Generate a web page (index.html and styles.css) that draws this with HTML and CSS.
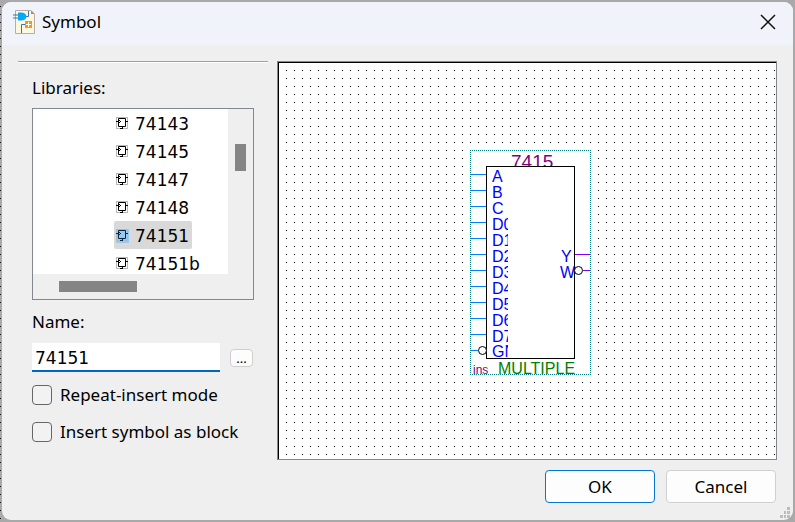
FILE: index.html
```html
<!DOCTYPE html>
<html lang="en">
<head>
<meta charset="utf-8">
<title>Symbol</title>
<link rel="stylesheet" href="styles.css">
</head>
<body>
<svg class="defs" aria-hidden="true">
  <symbol id="part" viewBox="0 0 13 14">
    <rect x=".5" y=".5" width="11" height="11" fill="none" stroke="#b8b8b8"/>
    <path d="M2.5 1.5H9.5V9.5H2.5ZM0 4.500H2M10 4.500H12M6.500 10V12M4 11.500H7" fill="none" stroke="currentColor"/>
    <path d="M3 3h1v1h-1zM4 4h1v1h-1zM3 5h1v1h-1z" fill="currentColor"/>
  </symbol>
</svg>
<main class="dialog">
  <header class="titlebar">
    <svg class="app-icon" width="22" height="24" viewBox="0 0 22 24" aria-hidden="true">
      <path d="M2.500 .5H18L21.500 4V23.500H2.500Z" fill="#fff8e1" stroke="#bcaaa4"/>
      <path d="M18 .5V4H21.500Z" fill="#a1887f"/>
      <path d="M0 5H6M0 8H6M13 6.500H15.500V1M8.500 23V14.500H13" fill="none" stroke="#3f6fb5"/>
      <path d="M5 2.500H9Q13 3 13.500 6.500Q13 10 9 10.500H5Z" fill="#03a9f4"/>
      <rect x="12" y="11" width="7" height="7" fill="#ff9800"/>
      <path d="M13 14.500H18M15.500 12V17" stroke="#fff"/>
    </svg>
    <h1>Symbol</h1>
    <button class="close" aria-label="Close">
      <svg width="16" height="16" viewBox="0 0 16 16"><path d="M1 1L15 15M15 1L1 15" stroke="#111" stroke-width="1.500"/></svg>
    </button>
  </header>
  <div class="content">
    <section class="side">
      <h2>Libraries:</h2>
      <div class="list">
        <ul>
          <li><svg><use href="#part"/></svg>74143</li>
          <li><svg><use href="#part"/></svg>74145</li>
          <li><svg><use href="#part"/></svg>74147</li>
          <li><svg><use href="#part"/></svg>74148</li>
          <li class="selected"><svg><use href="#part"/></svg>74151</li>
          <li><svg><use href="#part"/></svg>74151b</li>
        </ul>
        <div class="vbar"><span></span></div>
        <div class="hbar"><span></span></div>
      </div>
      <label class="name-label" for="name">Name:</label>
      <div class="name-row">
        <input id="name" type="text" value="74151">
        <button class="browse" aria-label="Browse">...</button>
      </div>
      <label class="check"><input type="checkbox">Repeat-insert mode</label>
      <label class="check"><input type="checkbox">Insert symbol as block</label>
    </section>
    <section class="canvas">
      <svg class="symbol" width="121" height="225" viewBox="0 0 121 225">
        <defs>
          <clipPath id="pins"><rect x="17" y="17" width="21" height="191"/></clipPath>
          <clipPath id="top"><rect x="30" y="0" width="60" height="16"/></clipPath>
        </defs>
        <rect width="121" height="225" fill="#fff"/>
        <path d="M0 .5H121M0 224.500H121M.5 0V225M120.500 0V225" stroke="#008080" stroke-dasharray="1 1"/>
        <path d="M1 24.500H16M1 40.500H16M1 56.500H16M1 72.500H16M1 88.500H16M1 104.500H16M1 120.500H16M1 136.500H16M1 152.500H16M1 168.500H16M1 184.500H16M1 200.500H8" stroke="#0080ff"/>
        <path d="M105 104.500H120M113 120.500H120" stroke="#8000ff"/>
        <rect x="16.500" y="16.500" width="88" height="192" fill="#fff" stroke="#000"/>
        <g class="pin" clip-path="url(#pins)">
          <text x="22" y="32">A</text><text x="22" y="48">B</text><text x="22" y="64">C</text>
          <text x="22" y="80">D0</text><text x="22" y="96">D1</text><text x="22" y="112">D2</text>
          <text x="22" y="128">D3</text><text x="22" y="144">D4</text><text x="22" y="160">D5</text>
          <text x="22" y="176">D6</text><text x="22" y="192">D7</text><text x="22" y="207">GN</text>
        </g>
        <g class="pin"><text x="91" y="112">Y</text><text x="90" y="128">W</text></g>
        <circle cx="12.500" cy="200.500" r="4" fill="#fff" stroke="#000"/>
        <circle cx="108.500" cy="120.500" r="4" fill="#fff" stroke="#000"/>
        <text class="value" x="41" y="18" clip-path="url(#top)">7415</text>
        <text class="inst" x="3" y="224">ins</text>
        <text class="kind" x="28" y="224">MULTIPLE</text>
      </svg>
    </section>
  </div>
  <footer>
    <button class="action primary">OK</button>
    <button class="action">Cancel</button>
  </footer>
  <svg class="grip" width="10" height="11" viewBox="0 0 10 11" aria-hidden="true">
    <path d="M7 0h3v3h-3zM4 4h2v3h-2zM7 4h3v3h-3zM0 8h3v3h-3zM4 8h2v3h-2zM7 8h3v3h-3z" fill="#bdbdbd"/>
  </svg>
</main>
</body>
</html>
```
FILE: styles.css
```css
* { box-sizing: border-box; }
body {
  margin: 0;
  min-height: 100vh;
  display: flex;
  padding: 2px;
  background: conic-gradient(from 270deg at 1px 1px, #111 90deg, transparent 0) 0 6px / 8px 8px repeat-y, #a9a9a9;
  font: 17px/24px "Noto Sans", sans-serif;
  color: #000;
}
h1, h2, ul { margin: 0; padding: 0; font: inherit; }
button { font: inherit; color: inherit; padding: 0; }
.defs { position: absolute; width: 0; height: 0; }
.dialog {
  flex: 1;
  position: relative;
  display: flex;
  flex-direction: column;
  background: #efefef;
  border-radius: 9px;
  overflow: hidden;
}
.titlebar {
  height: 43px;
  display: flex;
  align-items: center;
  gap: 7px;
  padding: 0 17px 3px 11px;
  background: #f0f3fa;
}
.titlebar h1 { flex: 1; }
.close { display: flex; border: 0; background: none; }
.content {
  flex: 1;
  display: flex;
  gap: 9px;
  padding: 16px 16px 0;
}
.side {
  width: 250px;
  padding: 14px 14px 0;
  border-top: 1px solid #a0a0a0;
  box-shadow: inset 0 1px #fff;
}
.list {
  display: grid;
  grid-template: 165px 25px / 1fr 25px;
  margin: 8px 0 10px;
  border: 1px solid #828790;
  background: #efefef;
}
.list ul {
  overflow: hidden;
  padding-left: 81px;
  background: #fff;
  list-style: none;
}
.list li {
  display: flex;
  align-items: center;
  gap: 6px;
  width: fit-content;
  height: 28px;
  padding: 2px 3px 0 2px;
  border-radius: 2px;
  font: 17px/24px "DejaVu Sans", sans-serif;
}
.list li svg { width: 13px; height: 14px; }
.selected { background: #d9d9d9; }
.selected svg { background: #99c9ef; color: #002a4a; }
.vbar { padding: 35px 7px; }
.vbar span { display: block; height: 27px; background: #858585; }
.hbar { padding: 7px 26px; }
.hbar span { display: block; width: 78px; height: 11px; background: #858585; }
.name-label { display: block; }
.name-row { display: flex; align-items: center; gap: 10px; margin: 9px 0 13px; padding-right: 1px; }
.name-row input {
  flex: 1;
  min-width: 0;
  height: 29px;
  padding: 2px 3px 0;
  border: 0;
  border-bottom: 2px solid #0067c0;
  font: 17px/24px "DejaVu Sans", sans-serif;
  outline: 0;
}
.browse {
  width: 23px;
  height: 18px;
  border: 1px solid #cfcfcf;
  border-radius: 4px;
  background: #fdfdfd;
  font-size: 13px;
  line-height: 16px;
}
.check { display: flex; align-items: center; gap: 8px; height: 20px; margin-bottom: 17px; line-height: 26px; }
.check input {
  appearance: none;
  width: 20px;
  height: 20px;
  margin: 0;
  border: 1px solid #666;
  border-radius: 4px;
  background: #f2f2f2;
}
.canvas {
  flex: 1;
  position: relative;
  border: 1px solid #828790;
  box-shadow: inset 1px 1px #000;
  background: conic-gradient(from 270deg at 1px 1px, #000 90deg, #fff 0) 0 0 / 8px 8px;
}
.symbol { position: absolute; left: 192px; top: 88px; }
.pin { font: 16px "Liberation Sans", sans-serif; fill: #00f; }
.value { font: 19px "Liberation Sans", sans-serif; fill: #800080; }
.inst { font: 12px "Liberation Sans", sans-serif; fill: #800080; }
.kind { font: 16px "Liberation Sans", sans-serif; fill: #008000; }
footer { display: flex; justify-content: flex-end; gap: 11px; padding: 10px 17px 17px; }
.action {
  width: 110px;
  height: 33px;
  border: 1px solid #d0d0d0;
  border-radius: 4px;
  background: #fdfdfd;
}
.primary { border-color: #0078d4; }
.grip { position: absolute; right: 3px; bottom: 2px; }
```
